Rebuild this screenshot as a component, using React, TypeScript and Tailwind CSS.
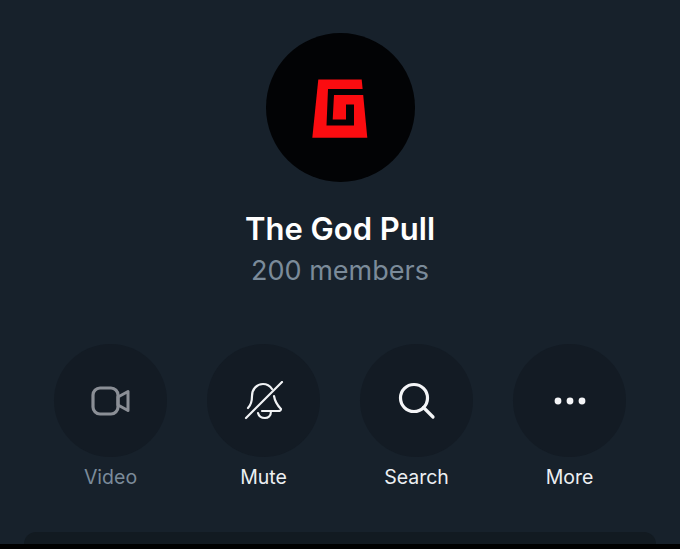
const actions = [
  { label: 'Video', muted: true, icon: <VideoIcon /> },
  { label: 'Mute', icon: <MuteIcon /> },
  { label: 'Search', icon: <SearchIcon /> },
  { label: 'More', icon: <MoreIcon /> },
];

function VideoIcon() {
  return (
    <svg width="40" height="32" viewBox="0 0 40 32" fill="none" stroke="#8b8f96" strokeWidth="3.2" strokeLinejoin="round">
      <rect x="2" y="3" width="25" height="26" rx="7" />
      <path d="M27 12 37 6.500V25.500L27 20Z" strokeWidth="3" />
    </svg>
  );
}

function MuteIcon() {
  return (
    <svg width="40" height="40" viewBox="0 0 40 40" fill="none" stroke="#f1f3f5" strokeWidth="2.2" strokeLinecap="round" strokeLinejoin="round">
      <path d="M4 27C7 24 8 20 8 15C8 8 13 3 19 3C23 3 26 5 28 8" />
      <path d="M30 15C31 21 33 24 37 28C37 30 36 30 34 30H18" />
      <path d="M14 32C15 36 18 37 21 37C24 37 27 35 27 30" />
      <path d="M38 1 2 37" />
    </svg>
  );
}

function SearchIcon() {
  return (
    <svg width="38" height="38" viewBox="0 0 38 38" fill="none" stroke="#f4f5f7" strokeWidth="3.2" strokeLinecap="round">
      <circle cx="16" cy="16" r="13.5" />
      <path d="M25.5 25.5 35 35" />
    </svg>
  );
}

function MoreIcon() {
  return (
    <svg width="34" height="10" viewBox="0 0 34 10" fill="#f4f5f7">
      <circle cx="5" cy="5" r="3.4" />
      <circle cx="17" cy="5" r="3.4" />
      <circle cx="29" cy="5" r="3.4" />
    </svg>
  );
}

function GroupLogo() {
  return (
    <svg width="60" height="60" viewBox="0 0 60 60">
      <path fill="#fb0c10" d="M8.300 1.500H51.700L57.300 59.700H2.300Z" />
      {/* channel that makes the G */}
      <path fill="#020305" d="M60 11H18L16.500 47.500H44V26.500H36V41.500H22.700L24 17H60Z" />
    </svg>
  );
}

export default function App() {
  return (
    <div className="relative flex h-[549px] w-[680px] flex-col items-center overflow-hidden bg-[#17212b] font-['Inter','Liberation_Sans',sans-serif]">
      <div className="mt-[33px] flex h-[149px] w-[149px] items-center justify-center rounded-full bg-[#020305]">
        <GroupLogo />
      </div>
      <h1 className="mt-[29px] text-[31px] leading-[36px] font-semibold text-white">The God Pull</h1>
      <p className="mt-[9px] text-[27px] leading-[30px] text-[#7b8b9a]">200 members</p>

      <div className="mt-[58px] flex gap-[40px]">
        {actions.map((action) => (
          <div key={action.label} className="flex w-[113px] flex-col items-center">
            <div className="flex h-[113px] w-[113px] items-center justify-center rounded-full bg-[#131b24]">
              {action.icon}
            </div>
            <span className={`mt-[6px] text-[19.500px] leading-[28px] ${action.muted ? 'text-[#7b8b9a]' : 'text-[#eceff2]'}`}>
              {action.label}
            </span>
          </div>
        ))}
      </div>

      <div className="mt-auto h-[5px] w-full bg-black">
        <div className="mx-[24px] -mt-[12px] h-[12px] rounded-t-[18px] bg-[#121a21]" />
      </div>
    </div>
  );
}
